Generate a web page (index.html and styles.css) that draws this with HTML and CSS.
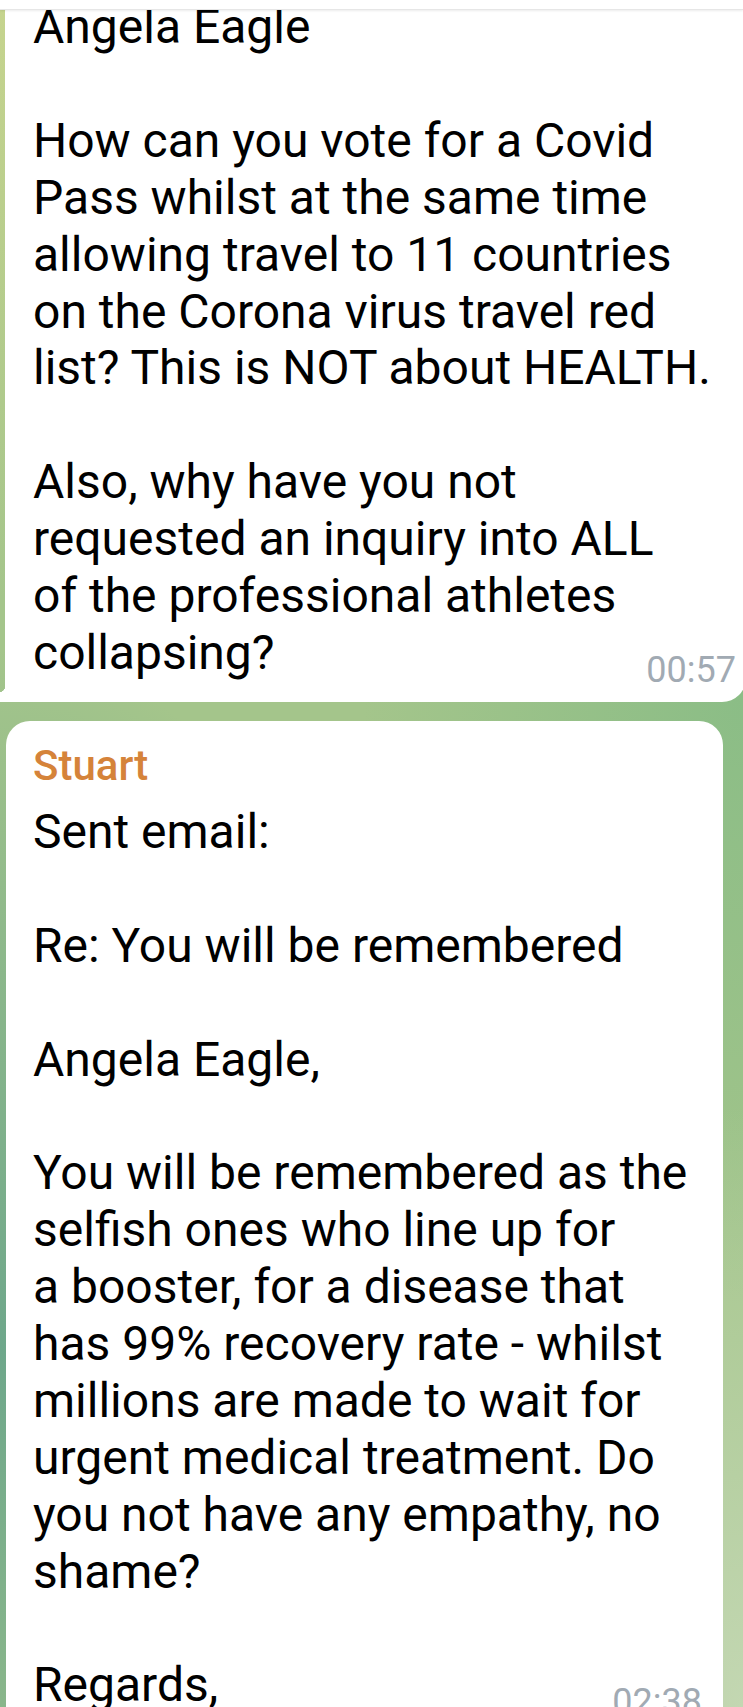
FILE: index.html
```html
<!DOCTYPE html>
<html lang="en">
<head>
    <meta charset="UTF-8">
    <meta name="viewport" content="width=device-width, initial-scale=1.0">
    <title>Chat</title>
    <link rel="stylesheet" href="styles.css">
</head>
<body>
    <div class="topbar"></div>

    <div class="chat">
        <div class="bubble bubble-first">
            <p class="text">Angela Eagle

How can you vote for a Covid
Pass whilst at the same time
allowing travel to 11 countries
on the Corona virus travel red
list? This is NOT about HEALTH.

Also, why have you not
requested an inquiry into ALL
of the professional athletes
collapsing?</p>
            <div class="time">00:57</div>
        </div>

        <div class="bubble bubble-second">
            <div class="name">Stuart</div>
            <p class="text">Sent email:

Re: You will be remembered

Angela Eagle,

You will be remembered as the
selfish ones who line up for
a booster, for a disease that
has 99% recovery rate - whilst
millions are made to wait for
urgent medical treatment. Do
you not have any empathy, no
shame?

Regards,</p>
            <div class="time">02:38</div>
        </div>
    </div>
</body>
</html>
```
FILE: styles.css
```css
/* Telegram style chat screen */
body {
    margin: 0;
    height: 1707px;
    overflow: hidden;
    font-family: Roboto, "Liberation Sans", sans-serif;
    background-color: #a4c58b;
    background-image:
        radial-gradient(ellipse 420px 600px at 0 0, #c6d48e, rgba(198, 212, 142, 0)),
        radial-gradient(ellipse 420px 700px at 0 1350px, #6ea78b, rgba(110, 167, 139, 0)),
        radial-gradient(ellipse 360px 600px at 743px 1707px, #c3d7b2, rgba(195, 215, 178, 0)),
        radial-gradient(ellipse 380px 600px at 743px 700px, #8bbd86, rgba(139, 189, 134, 0));
}
.topbar {
    position: absolute;
    top: 0;
    left: 0;
    right: 0;
    height: 9px;
    background-color: #fff;
    border-bottom: 1px solid #e6e6e6;
    box-shadow: 0 1px 2px rgba(0, 0, 0, 0.08);
    z-index: 2;
}
.chat {
    display: flex;
    flex-direction: column;
    gap: 19px;
    margin-top: -13px;
}
.bubble {
    position: relative;
    background-color: #fff;
    border-radius: 24px;
    padding: 12px 10px 14px 28px;
}
.bubble-first {
    margin-left: 5px;
    margin-right: -3px;
    border-bottom-left-radius: 0;
}
.bubble-first::before {
    content: "";
    position: absolute;
    left: -6px;
    bottom: 0;
    width: 6px;
    height: 16px;
    background: radial-gradient(circle at 0 0, transparent 6px, #fff 6.5px);
}
.bubble-second {
    margin-left: 6px;
    margin-right: 20px;
    padding: 20px 21px 14px 27px;
}
.name {
    font-size: 42px;
    font-weight: 500;
    line-height: 50px;
    color: #d5833a;
    margin-bottom: 13px;
}
.text {
    margin: 0;
    white-space: pre;
    font-size: 48px;
    line-height: 56.9px;
    color: #000;
}
.time {
    margin-top: -30px;
    text-align: right;
    font-size: 36px;
    line-height: 36px;
    color: #a1aab3;
}
```
